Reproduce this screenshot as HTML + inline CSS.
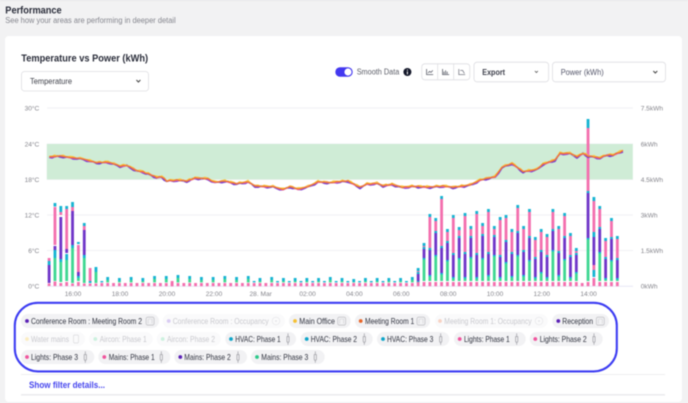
<!DOCTYPE html>
<html lang="en"><head><meta charset="utf-8"><title>Performance</title>
<style>
html,body{margin:0;padding:0;width:688px;height:403px;overflow:hidden;background:#f2f2f3}
svg{display:block;filter:blur(.4px)}
text{font-family:"Liberation Sans",sans-serif}
.ax{font-size:6.6px;fill:#85858c}
.c{font-size:8.1px;fill:#2f323e}
.f{font-size:8.1px;fill:#c9c9ce}
.chip{fill:#f2f2f4}
.fchip{fill:#fafafb}
</style></head><body>
<svg id="s" width="688" height="403" viewBox="0 0 688 403" xmlns="http://www.w3.org/2000/svg">
<defs>
<symbol id="box" viewBox="0 0 9 9"><rect x=".5" y=".5" width="8" height="8" rx="1.8" fill="none" stroke="#bcbcc0" stroke-width=".7"/><path d="M2.5 7V3.6Q2.5 2.4 3.7 2.4H6.5V7" fill="none" stroke="#cfcfd3" stroke-width=".6"/></symbol>
<symbol id="plug" viewBox="0 0 6 12"><path d="M3 .4V3.4M1.9 3.6V8Q1.9 9.4 3 9.4Q4.1 9.4 4.1 8V3.6ZM3 9.4V11.8" fill="none" stroke="#a2a2a8" stroke-width=".75"/></symbol>
<symbol id="fcirc" viewBox="0 0 9 9"><circle cx="4.5" cy="4.5" r="3.8" fill="none" stroke="#e6e6e8" stroke-width=".7"/><circle cx="4.5" cy="4.5" r=".8" fill="#dcdcde"/></symbol>
</defs>
<rect width="688" height="403" fill="#f2f2f3"/>
<rect x="0" y="0" width="688" height="1.2" fill="#eaeaeb"/>
<rect x="5" y="36" width="677" height="366" rx="4" fill="#fff"/>

<text x="5.3" y="13.6" font-size="10.4" font-weight="700" fill="#2a2d3a" textLength="56.4" lengthAdjust="spacingAndGlyphs">Performance</text>
<text x="5.3" y="23.2" font-size="7.8" fill="#85868e" textLength="170.4" lengthAdjust="spacingAndGlyphs">See how your areas are performing in deeper detail</text>
<text x="21.3" y="61.6" font-size="10.4" font-weight="700" fill="#2a2d3a" textLength="126.8" lengthAdjust="spacingAndGlyphs">Temperature vs Power (kWh)</text>

<rect x="21.5" y="71.5" width="127" height="19.5" rx="3" fill="#fff" stroke="#dedee2" stroke-width=".8"/>
<text x="30" y="83.8" font-size="8" fill="#3e4049" textLength="42" lengthAdjust="spacingAndGlyphs">Temperature</text>
<path d="M136.4 80L138.4 82L140.4 80" fill="none" stroke="#444" stroke-width="1"/>

<rect x="335.3" y="67.3" width="17.4" height="9.4" rx="4.7" fill="#4338f0"/>
<circle cx="348" cy="72" r="3.6" fill="#fff"/>
<text x="356.7" y="74.6" font-size="8" fill="#5c5e68" textLength="42.6" lengthAdjust="spacingAndGlyphs">Smooth Data</text>
<circle cx="407.4" cy="72" r="4" fill="#14182a"/>
<rect x="406.9" y="71.4" width="1" height="3" fill="#fff"/><rect x="406.9" y="69.6" width="1" height="1" fill="#fff"/>

<rect x="421.8" y="63.8" width="48" height="16" rx="3" fill="#fff" stroke="#dedee2" stroke-width=".8"/>
<path d="M437.7 64V80M453.7 64V80" stroke="#dedee2" stroke-width=".8"/>
<path d="M426.6 69V74.6H433.2M428 73L429.6 71.4L431 72.4L432.8 70.4" fill="none" stroke="#5a5d68" stroke-width=".8"/>
<path d="M442.6 69V74.6H449.2M444 74V71.6M445.6 74V70.4M447.2 74V71.6" fill="none" stroke="#5a5d68" stroke-width=".8"/>
<path d="M458.8 69V74.6H465.2M460.2 70.4H462.6L464.4 73.4" fill="none" stroke="#7a7c86" stroke-width=".8"/>

<rect x="474" y="62.2" width="74.6" height="19.6" rx="3" fill="#fff" stroke="#dedee2" stroke-width=".8"/>
<text x="482.3" y="74.8" font-size="8.2" font-weight="700" fill="#3a3c48" textLength="22.7" lengthAdjust="spacingAndGlyphs">Export</text>
<path d="M534.9 71L536.4 72.5L537.9 71" fill="none" stroke="#555" stroke-width=".8"/>
<rect x="552.5" y="62.2" width="113" height="19.6" rx="3" fill="#fff" stroke="#dedee2" stroke-width=".8"/>
<text x="560.7" y="74.8" font-size="8.2" fill="#54566a" textLength="43" lengthAdjust="spacingAndGlyphs">Power (kWh)</text>
<path d="M653.3 71L655.3 73L657.3 71" fill="none" stroke="#444" stroke-width="1"/>

<!-- chart -->
<g stroke="#f1f1f4" stroke-width="1">
<path d="M47 108H633M47 144H633M47 179.5H633M47 215H633M47 250.5H633"/>
</g>
<path d="M47 286.3H633" stroke="#e8e8f6" stroke-width="1"/>
<rect x="46.8" y="144" width="586" height="35.4" fill="#cfecd6"/>
<g id="bars"></g>
<g id="lines" fill="none" stroke-linejoin="round"></g>

<g class="ax" text-anchor="end">
<text x="39.3" y="110.6">30°C</text><text x="39.3" y="146.4">24°C</text><text x="39.3" y="182">18°C</text><text x="39.3" y="217.4">12°C</text><text x="39.3" y="253">6°C</text><text x="39.3" y="288.6">0°C</text>
</g>
<g class="ax">
<text x="640.7" y="110.4">7.5kWh</text><text x="640.7" y="146.3">6kWh</text><text x="640.7" y="181.9">4.5kWh</text><text x="640.7" y="217.4">3kWh</text><text x="640.7" y="253">1.5kWh</text><text x="640.7" y="288.6">0kWh</text>
</g>
<g class="ax" text-anchor="middle">
<text x="73" y="295.8">16:00</text><text x="120" y="295.8">18:00</text><text x="167" y="295.8">20:00</text><text x="214" y="295.8">22:00</text><text x="260.7" y="295.8">28. Mar</text><text x="307.6" y="295.8">02:00</text><text x="354.4" y="295.8">04:00</text><text x="401.3" y="295.8">06:00</text><text x="448.2" y="295.8">08:00</text><text x="495" y="295.8">10:00</text><text x="541.8" y="295.8">12:00</text><text x="588.6" y="295.8">14:00</text>
</g>

<!-- chips row 1 -->
<rect class="chip" x="21" y="314" width="138" height="14" rx="7"/><circle cx="27" cy="321" r="1.9" fill="#5b21b6"/><text class="c" x="31" y="323.8" textLength="111" lengthAdjust="spacingAndGlyphs">Conference Room : Meeting Room 2</text><use href="#box" x="145.6" y="316.6" width="9" height="9"/>
<rect class="fchip" x="162.7" y="314" width="122.3" height="14" rx="7"/><circle cx="168.7" cy="321" r="1.9" fill="#d9ccf3"/><text class="f" x="172.7" y="323.8" textLength="96" lengthAdjust="spacingAndGlyphs">Conference Room : Occupancy</text><use href="#fcirc" x="271.5" y="316.5" width="9" height="9"/>
<rect class="chip" x="289" y="314" width="61.7" height="14" rx="7"/><circle cx="295" cy="321" r="1.9" fill="#f5c033"/><text class="c" x="299.3" y="323.8" textLength="35.7" lengthAdjust="spacingAndGlyphs">Main Office</text><use href="#box" x="337.2" y="316.6" width="9" height="9"/>
<rect class="chip" x="355" y="314" width="75" height="14" rx="7"/><circle cx="360.7" cy="321" r="1.9" fill="#e8672a"/><text class="c" x="365" y="323.8" textLength="49.3" lengthAdjust="spacingAndGlyphs">Meeting Room 1</text><use href="#box" x="416.5" y="316.6" width="9" height="9"/>
<rect class="fchip" x="435" y="314" width="112.7" height="14" rx="7"/><circle cx="440" cy="321" r="1.9" fill="#f8d3c4"/><text class="f" x="444.3" y="323.8" textLength="87.4" lengthAdjust="spacingAndGlyphs">Meeting Room 1: Occupancy</text><use href="#fcirc" x="534.5" y="316.5" width="9" height="9"/>
<rect class="chip" x="552.3" y="314" width="56.7" height="14" rx="7"/><circle cx="558.3" cy="321" r="1.9" fill="#5b21b6"/><text class="c" x="562.3" y="323.8" textLength="30.7" lengthAdjust="spacingAndGlyphs">Reception</text><use href="#box" x="595.8" y="316.6" width="9" height="9"/>

<!-- chips row 2 -->
<rect class="fchip" x="21" y="332" width="64" height="14" rx="7"/><circle cx="27" cy="339" r="1.9" fill="#fbedc2"/><text class="f" x="31" y="341.8" textLength="38" lengthAdjust="spacingAndGlyphs">Water mains</text><rect x="73.5" y="335" width="5" height="8" rx="1.2" fill="none" stroke="#dcdcde" stroke-width=".7"/>
<rect class="fchip" x="89" y="332" width="63.7" height="14" rx="7"/><circle cx="95.3" cy="339" r="1.9" fill="#cdf1df"/><text class="f" x="99.7" y="341.8" textLength="47" lengthAdjust="spacingAndGlyphs">Aircon: Phase 1</text>
<rect class="fchip" x="156.7" y="332" width="64" height="14" rx="7"/><circle cx="162.7" cy="339" r="1.9" fill="#cdf1df"/><text class="f" x="167" y="341.8" textLength="48" lengthAdjust="spacingAndGlyphs">Aircon: Phase 2</text>
<rect class="chip" x="225.3" y="332" width="70.7" height="14" rx="7"/><circle cx="231" cy="339" r="1.9" fill="#0ea5c9"/><text class="c" x="235.3" y="341.8" textLength="45.4" lengthAdjust="spacingAndGlyphs">HVAC: Phase 1</text><use href="#plug" x="285" y="333" width="6" height="12"/>
<rect class="chip" x="300.7" y="332" width="72" height="14" rx="7"/><circle cx="306.7" cy="339" r="1.9" fill="#0ea5c9"/><text class="c" x="310.7" y="341.8" textLength="46.3" lengthAdjust="spacingAndGlyphs">HVAC: Phase 2</text><use href="#plug" x="361.3" y="333" width="6" height="12"/>
<rect class="chip" x="377" y="332" width="72.3" height="14" rx="7"/><circle cx="383" cy="339" r="1.9" fill="#0ea5c9"/><text class="c" x="387" y="341.8" textLength="46.3" lengthAdjust="spacingAndGlyphs">HVAC: Phase 3</text><use href="#plug" x="437.7" y="333" width="6" height="12"/>
<rect class="chip" x="454" y="332" width="71.7" height="14" rx="7"/><circle cx="459.7" cy="339" r="1.9" fill="#f0559d"/><text class="c" x="464" y="341.8" textLength="45.7" lengthAdjust="spacingAndGlyphs">Lights: Phase 1</text><use href="#plug" x="513.7" y="333" width="6" height="12"/>
<rect class="chip" x="529.7" y="332" width="73" height="14" rx="7"/><circle cx="535.3" cy="339" r="1.9" fill="#f0559d"/><text class="c" x="539.7" y="341.8" textLength="47" lengthAdjust="spacingAndGlyphs">Lights: Phase 2</text><use href="#plug" x="591" y="333" width="6" height="12"/>

<!-- chips row 3 -->
<rect class="chip" x="21" y="350" width="73.3" height="14" rx="7"/><circle cx="27" cy="357" r="1.9" fill="#f0559d"/><text class="c" x="31" y="359.8" textLength="47" lengthAdjust="spacingAndGlyphs">Lights: Phase 3</text><use href="#plug" x="82.3" y="351" width="6" height="12"/>
<rect class="chip" x="98.3" y="350" width="72" height="14" rx="7"/><circle cx="104.3" cy="357" r="1.9" fill="#f0559d"/><text class="c" x="108.7" y="359.8" textLength="46" lengthAdjust="spacingAndGlyphs">Mains: Phase 1</text><use href="#plug" x="158.3" y="351" width="6" height="12"/>
<rect class="chip" x="174.3" y="350" width="72.7" height="14" rx="7"/><circle cx="180.3" cy="357" r="1.9" fill="#5b21b6"/><text class="c" x="184.3" y="359.8" textLength="46.4" lengthAdjust="spacingAndGlyphs">Mains: Phase 2</text><use href="#plug" x="235" y="351" width="6" height="12"/>
<rect class="chip" x="251" y="350" width="73.7" height="14" rx="7"/><circle cx="257" cy="357" r="1.9" fill="#2dc98a"/><text class="c" x="261.3" y="359.8" textLength="47" lengthAdjust="spacingAndGlyphs">Mains: Phase 3</text><use href="#plug" x="312.3" y="351" width="6" height="12"/>

<rect x="14.8" y="302.8" width="602" height="68.6" rx="23" fill="none" stroke="#3c3cf2" stroke-width="2.1"/>
<path d="M21 374.5H665" stroke="#e8e8ea" stroke-width=".8"/>
<text x="29" y="387.8" font-size="9.2" font-weight="700" fill="#4646ee" textLength="76" lengthAdjust="spacingAndGlyphs">Show filter details...</text>
<path d="M21 394.8H665" stroke="#ececee" stroke-width="1.6"/>
</svg>
<script>
(function(){
var NS="http://www.w3.org/2000/svg";
var P="#f36fae",U="#6f35c8",G="#3fd792",C="#16b4d2";
var bars=document.getElementById("bars");
function X(i){return 49.1+5.858*i}
function seg(i,c,a,b){var r=document.createElementNS(NS,"rect");r.setAttribute("x",(X(i)-1.4).toFixed(2));r.setAttribute("y",a);r.setAttribute("width",2.8);r.setAttribute("height",Math.max(b-a,.5));r.setAttribute("fill",c);bars.appendChild(r)}
var left={0:[[P,258,261],[C,261,265],[U,265,283],[P,283.5,286]],
1:[[C,203,206.5],[P,207,245],[U,246,250],[C,250,258],[G,258,281],[P,281.5,286]],
2:[[C,206,212],[P,212,215],[U,217,259],[C,259,262],[G,262,282],[P,283,286]],
3:[[C,206,209],[P,209,249],[U,249,253],[C,254,260],[G,260,281],[P,282,286]],
4:[[C,202,207],[P,207,211],[U,211,245],[C,245,248],[G,248,283],[P,283.5,286]],
5:[[C,242,244],[P,245,272],[U,272,276],[C,276,278],[G,278,281],[P,282,286]],
6:[[C,223,226],[P,226,230],[U,230,255],[C,255,258],[G,258,283],[P,283.5,286]],
7:[[P,268,281],[C,281,283],[P,283.5,286]],
8:[[C,267,272],[G,272,283],[P,283.5,286]]};
for(var k in left){left[k].forEach(function(s){seg(+k,s[0],s[1],s[2])})}
var small={9:281,10:277,12:278,14:277,16:278,18:276,20:276,22:275,24:276,26:277,28:277,30:276,32:277,34:276,35:281,36:278,38:277,39:281,40:278,41:281,42:278,43:281,44:278,45:281,46:278,47:281,48:277,49:281,50:278,51:281,52:279,53:281,54:278,55:281,56:278,57:281,58:278,59:281,60:278,61:281,62:277};
for(var i=9;i<=91;i++){
 if(i>=63&&i<91)continue;
 seg(i,P,283,286.2);
 if(small[i]){var t=small[i];
  if(t<281){seg(i,C,t,t+3);seg(i,G,t+3,282.4)}else{seg(i,C,t,282.4)}
 }
}
seg(21,P,281,286.2);
var tall={63:[268,272,281],64:[243,247,258],65:[214,248,275],66:[218,231,255],67:[196,246,273],68:[229,241,260],69:[215,253,277],70:[227,236,258],71:[213,252,277],72:[226,236,257],73:[211,253,277],74:[223,234,258],75:[209,252,275],76:[226,235,255],77:[217,255,277],78:[215,240,262],79:[229,252,276],80:[205,231,255],81:[226,250,275],82:[209,236,260],83:[237,257,277],84:[229,250,272],85:[234,255,277],86:[209,229,250],87:[226,251,275],88:[213,236,259],89:[233,255,277],90:[248,253,272],92:[119,191,238],94:[206,227,252],95:[238,257,278],96:[218,237,260],97:[236,258,278]};
for(var j in tall){var a=tall[j],T=a[0],Pk=a[1],Gg=a[2],ct=(+j===92)?9:3;
 j=+j;
 seg(j,C,T,T+ct);
 seg(j,P,T+ct,Pk);
 seg(j,C,Pk,Pk+2);
 seg(j,U,Pk+2,Gg);
 seg(j,C,Gg,Gg+1.5);
 seg(j,G,Gg+1.5,281);
 seg(j,P,282,286.2);
}
[[C,197,201],[P,201,232],[C,232,237],[U,237,265],[P,265,270],[C,270,277],[P,278,286]].forEach(function(s){seg(93,s[0],s[1],s[2])});
var pts=[[49.3,156.7],[60,156],[70,157.3],[83.3,159],[96.7,162.7],[108,162],[120,166],[126.7,165.3],[136.7,170.7],[143,171.7],[156.7,177.3],[161.7,176.7],[166.7,181],[176.7,180],[186.7,181],[195,178],[208,178.7],[215,182.3],[225,181],[236.7,183.7],[248,181.7],[255,186],[273,186.7],[283,189.3],[290,186.7],[298,189],[308,186.7],[318,181.7],[330,182.7],[337,181.7],[348,181],[360,187.3],[367,184],[377,183.3],[383,185.7],[392,184.3],[402,187.3],[412,186.3],[430,187],[443,186],[453,187.3],[470,185],[480,180],[495,176.7],[502,167.3],[512,163.3],[523,171.7],[537,169.3],[543,164],[555,160],[560,153.3],[570,153.3],[577,156.7],[583,153.3],[588,156],[600,157.7],[607,155],[613,155],[623,150.7]];
var dense=[];
for(var n=0;n<pts.length-1;n++){var a0=pts[n],b0=pts[n+1],steps=Math.max(1,Math.round((b0[0]-a0[0])/3));for(var q=0;q<steps;q++){dense.push([a0[0]+(b0[0]-a0[0])*q/steps,a0[1]+(b0[1]-a0[1])*q/steps])}}
dense.push(pts[pts.length-1]);
var lines=document.getElementById("lines");
[["#7a3fd0",.55,1.8,1.7,.75],["#f6c944",-.5,1.5,2.3,.7],["#ea5aa0",.2,1.1,1.1,.5],["#f07a2c",0,1.15,3.1,.45]].forEach(function(l){
 var d=dense.map(function(p,i){var jit=Math.sin(i*l[3])*l[4];return p[0].toFixed(1)+","+(p[1]+l[1]+jit).toFixed(1)}).join(" ");
 var e=document.createElementNS(NS,"polyline");e.setAttribute("points",d);e.setAttribute("stroke",l[0]);e.setAttribute("stroke-width",l[2]);lines.appendChild(e);
});
})();
</script>
</body></html>
